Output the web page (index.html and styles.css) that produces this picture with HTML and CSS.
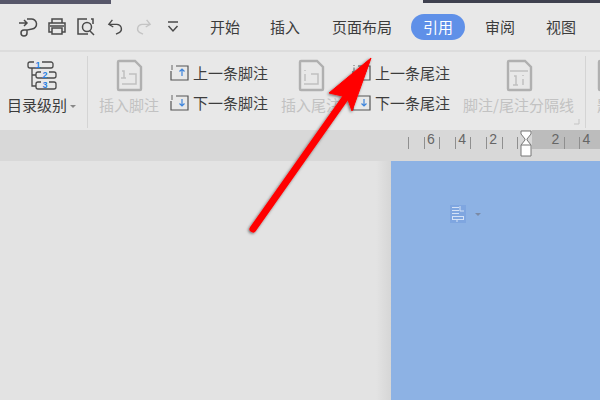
FILE: index.html
```html
<!DOCTYPE html>
<html lang="zh-CN">

<head>
  <meta charset="UTF-8">
  <title>引用</title>
  <link rel="stylesheet" href="styles.css">
</head>

<body>
  <div class="topstrip">
    <div class="left"></div>
    <div class="right"></div>
  </div>

  <div class="tabbar">
    <div class="quick">
      <svg class="qicon save" viewBox="0 0 20 20"><path d="M-6 3h12l4 4v10H-6zM1 17v-6h6v6" /></svg>
      <svg class="qicon" viewBox="0 0 20 20"><path d="M1 6h8M6 3l3 3-3 3M9 2h4a5 5 0 0 1 1 10l-5 1v3a3 3 0 1 1-3-3h4" /></svg>
      <svg class="qicon" viewBox="0 0 20 20"><path d="M5 6V2h10v4M5 15H2V6h16v9h-3M5 11h10v6H5zM3 9h14" /></svg>
      <svg class="qicon" viewBox="0 0 20 20"><path d="M11 2H2v15h10M15 2h2v5M18 18l-4-4" /><circle cx="11" cy="10" r="4.500" /></svg>
      <svg class="qicon undo" viewBox="0 0 20 20"><path d="M6 2L2 7l5 3M2 7h9a5 5 0 0 1 3 9l-4 2" /></svg>
      <svg class="qicon off" viewBox="0 0 20 20"><path d="M14 2l4 5-5 3M18 7H9a5 5 0 0 0-3 9l4 2" /></svg>
      <svg class="qicon more" viewBox="0 0 14 14"><path d="M2 2h10M2.500 6l4.500 5 4.500-5" /></svg>
    </div>
    <div class="tabs">
      <span class="tab t1">开始</span>
      <span class="tab t2">插入</span>
      <span class="tab t3">页面布局</span>
      <span class="tab active">引用</span>
      <span class="tab t5">审阅</span>
      <span class="tab">视图</span>
    </div>
  </div>

  <div class="ribbon">
    <div class="group toc">
      <svg class="tocicon" viewBox="0 0 30 30">
        <path class="line" d="M7 1H3a2 2 0 0 0-2 2v2a2 2 0 0 0 2 2h21a2 2 0 0 0 2-2V3a2 2 0 0 0-2-2h-9" />
        <path class="line" d="M14 11h-3a2 2 0 0 0-2 2v2a2 2 0 0 0 2 2h16a2 2 0 0 0 2-2v-2a2 2 0 0 0-2-2h-5" />
        <path class="line" d="M14 21h-3a2 2 0 0 0-2 2v3a2 2 0 0 0 2 2h16a2 2 0 0 0 2-2v-3a2 2 0 0 0-2-2h-5" />
        <path class="line" d="M5 7v18h4M5 14h4" />
        <text x="11" y="7">1</text>
        <text x="18" y="17">2</text>
        <text x="18" y="27">3</text>
      </svg>
      <div class="label">目录级别<i class="caret"></i></div>
    </div>
    <div class="sep"></div>

    <div class="group big note1">
      <svg class="doc" viewBox="0 0 26 31"><path class="edge" d="M3 1h16l6 6v22a1 1 0 0 1-1 1H3a1 1 0 0 1-1-1V2a1 1 0 0 1 1-1z" /><path class="thin" d="M6 11h2v7M5 18h5M13 14h7v10H6" /></svg>
      <div class="label off">插入脚注</div>
    </div>

    <div class="group pair p1">
      <div class="row"><svg class="nav" viewBox="0 0 19 17"><path class="box" d="M6 2h12v14H1V7" /><path class="num" d="M2 1v5" /><path class="arr" d="M12 12V5M9.500 7.500L12 5l2.500 2.500" /></svg>上一条脚注</div>
      <div class="row"><svg class="nav" viewBox="0 0 19 17"><path class="box" d="M6 2h12v14H1V7" /><path class="num" d="M2 1v5" /><path class="arr" d="M12 5v7M9.500 9.500L12 12l2.500-2.500" /></svg>下一条脚注</div>
    </div>

    <div class="group big note2">
      <svg class="doc" viewBox="0 0 26 31"><path class="edge" d="M3 1h16l6 6v22a1 1 0 0 1-1 1H3a1 1 0 0 1-1-1V2a1 1 0 0 1 1-1z" /><path class="thin" d="M7 10v1M7 14v7M13 14h7v10H6" /></svg>
      <div class="label off">插入尾注</div>
    </div>

    <div class="group pair p2">
      <div class="row"><svg class="nav" viewBox="0 0 19 17"><path class="box" d="M6 2h12v14H1V7" /><path class="num" d="M2 1v1M2 3.500V7" /><path class="arr" d="M12 12V5M9.500 7.500L12 5l2.500 2.500" /></svg>上一条尾注</div>
      <div class="row"><svg class="nav" viewBox="0 0 19 17"><path class="box" d="M6 2h12v14H1V7" /><path class="num" d="M2 1v1M2 3.500V7" /><path class="arr" d="M12 5v7M9.500 9.500L12 12l2.500-2.500" /></svg>下一条尾注</div>
    </div>

    <div class="group big sepnote">
      <svg class="doc" viewBox="0 0 26 31"><path class="edge" d="M3 1h16l6 6v22a1 1 0 0 1-1 1H3a1 1 0 0 1-1-1V2a1 1 0 0 1 1-1z" /><path class="thin" d="M4 11h18M8 16h2v9M7 25h5M17 15v1M17 19v6" /></svg>
      <div class="label off">脚注/尾注分隔线</div>
      <svg class="launcher" viewBox="0 0 6 6"><path d="M5 0v5H0" /></svg>
    </div>
    <div class="sep end"></div>

    <div class="group big cutoff">
      <svg class="doc" viewBox="0 0 26 31"><path class="edge" d="M3 1h16l6 6v22a1 1 0 0 1-1 1H3a1 1 0 0 1-1-1V2a1 1 0 0 1 1-1z" /></svg>
      <div class="label off">题注</div>
    </div>
  </div>

  <div class="rulerbar">
    <div class="ruler">
      <div class="ticks">
        <i class="tk"></i><b></b><i class="tk"></i><b>6</b>
        <i class="tk"></i><b></b><i class="tk"></i><b>4</b>
        <i class="tk"></i><b></b><i class="tk"></i><b>2</b>
        <i class="tk"></i><b></b><i class="tk"></i>
      </div>
      <div class="ticks dim">
        <b>2</b><i class="tk"></i><b></b><i class="tk"></i><b>4</b>
      </div>
      <svg class="marker" viewBox="0 0 12 27"><path d="M1 1h10v3L7 9v1l4 5v11H1V15l4-5V9L1 4zM1 15h10" /></svg>
    </div>
  </div>

  <div class="workspace">
    <div class="margin"></div>
    <div class="page">
      <div class="para">
        <svg class="paraicon" viewBox="0 0 16 18"><path d="M2 2.500h7M2 5.500h7M2 8.500h7M10 1v5h4M7 14.500V17" /><rect x="2.500" y="11.500" width="11" height="3" /></svg>
        <i class="paracaret"></i>
      </div>
    </div>
  </div>

  <!-- red arrow drawn over the screenshot -->
  <svg class="arrow" viewBox="0 0 600 400">
    <defs>
      <filter id="shade" x="-20%" y="-20%" width="140%" height="140%">
        <feDropShadow dx="-1" dy="1" stdDeviation="1.500" flood-color="#000" flood-opacity=".55" />
      </filter>
    </defs>
    <g filter="url(#shade)">
      <path d="M253 229L346 97" stroke="#f00" stroke-width="7" stroke-linecap="round" />
      <path d="M371 58L329 93L347 97L352 111Z" fill="#f00" stroke="#f00" stroke-linejoin="round" />
    </g>
  </svg>
</body>

</html>
```

FILE: styles.css
```css
* {
  box-sizing: border-box;
}

body {
  margin: 0;
  width: 600px;
  height: 400px;
  overflow: hidden;
  position: relative;
  background: #e3e3e3;
  font-family: "Noto Sans CJK SC", "Liberation Sans", sans-serif;
  color: #3c3c3c;
}

.topstrip {
  height: 4px;
  display: flex;
  justify-content: space-between;
  background: #e8e8e8;
}

.left {
  width: 111px;
  background: #57576a;
}

.right {
  width: 177px;
  height: 3px;
  background: #3f414f;
}

/* tab row */
.tabbar {
  height: 46px;
  background: #e8e8e8;
  display: flex;
  align-items: center;
}

.quick {
  display: flex;
  align-items: center;
  width: 210px;
  height: 26px;
}

.qicon {
  width: 20px;
  height: 20px;
  margin-right: 9px;
  fill: none;
  stroke: #4a4a4a;
  stroke-width: 1.500;
  overflow: hidden;
  flex: none;
}

.save {
  margin-left: -13px;
  margin-right: 11px;
}

.undo {
  width: 18px;
  height: 18px;
  margin-left: 2px;
  margin-right: 9px;
}

.qicon.off {
  width: 18px;
  height: 18px;
  stroke: #c4c4c4;
  margin-right: 14px;
}

.qicon.more {
  width: 14px;
  height: 14px;
  margin: 0;
}

.tabs {
  display: flex;
  align-items: center;
  font-size: 15px;
  line-height: 20px;
}

.tab {
  white-space: nowrap;
}

.t1 {
  margin-right: 30px;
}

.t2 {
  margin-right: 32px;
}

.t3 {
  margin-right: 19px;
}

.t5 {
  margin-right: 31px;
}

.active {
  width: 54px;
  height: 26px;
  line-height: 26px;
  margin-right: 20px;
  text-align: center;
  border-radius: 13px;
  background: #5f90e8;
  color: #fff;
}

/* ribbon */
.ribbon {
  height: 80px;
  background: #e8e8e8;
  border-top: 2px solid #dcdcdc;
  display: flex;
}

.group {
  display: flex;
  flex-direction: column;
  align-items: center;
  position: relative;
  flex: none;
}

.label {
  font-size: 15px;
  line-height: 20px;
  white-space: nowrap;
}

.off {
  color: #c2c2c2;
}

.toc {
  width: 87px;
  padding-top: 9px;
}

.tocicon {
  width: 30px;
  height: 30px;
  margin-bottom: 4px;
  margin-left: -3px;
  fill: none;
  overflow: visible;
}

.tocicon .line {
  stroke: #4a4a4a;
  stroke-width: 1.300;
}

.tocicon text {
  fill: #2a7fe0;
  stroke: none;
  font-family: "Liberation Sans", sans-serif;
  font-size: 9px;
  font-weight: bold;
  text-anchor: middle;
}

.caret {
  display: inline-block;
  margin-left: 3px;
  vertical-align: 3px;
  border: 3px solid transparent;
  border-top: 3px solid #888;
  border-bottom: 0;
}

.toc .label {
  margin-left: -4px;
}

.sep {
  width: 1px;
  height: 72px;
  margin-top: 4px;
  background: #d4d4d4;
  flex: none;
}

.sep.end {
  margin-left: 11px;
}

.big {
  padding-top: 8px;
}

.doc {
  width: 26px;
  height: 31px;
  margin-bottom: 4px;
  fill: none;
  overflow: visible;
}

.doc .edge {
  stroke: #b0b0b0;
  stroke-width: 2.400;
}

.doc .thin {
  stroke: #c0c0c0;
  stroke-width: 1.500;
}

.note1 {
  width: 82px;
}

.note2 {
  width: 72px;
  margin-left: 6px;
}

.sepnote {
  width: 111px;
  margin-left: 12px;
}

.cutoff {
  margin-left: 11px;
  align-items: flex-start;
}

.pair {
  width: 99px;
  padding-top: 5px;
  align-items: flex-start;
}

.p2 {
  margin-left: 5px;
}

.row {
  display: flex;
  align-items: center;
  height: 30px;
  font-size: 15px;
  white-space: nowrap;
}

.nav {
  width: 19px;
  height: 17px;
  margin-right: 4px;
  fill: none;
}

.nav .box {
  stroke: #555;
  stroke-width: 1.200;
}

.nav .num {
  stroke: #666;
}

.nav .arr {
  stroke: #3d84db;
  stroke-width: 1.200;
}

.launcher {
  position: absolute;
  right: -6px;
  bottom: 5px;
  width: 6px;
  height: 6px;
  fill: none;
  stroke: #c4c4c4;
}

/* ruler */
.rulerbar {
  height: 31px;
  background: #d8d8d8;
}

.ruler {
  height: 19px;
  position: relative;
  display: flex;
}

.ticks {
  margin-left: 408px;
  width: 124px;
  height: 19px;
  display: flex;
  align-items: flex-end;
  font-size: 14px;
  line-height: 19px;
  color: #666;
  font-family: "Liberation Sans", sans-serif;
}

.ticks b {
  width: 14.600px;
  height: 19px;
  font-weight: normal;
  text-align: center;
  flex: none;
  position: relative;
  left: -1px;
}

.tk {
  width: 1px;
  height: 12px;
  background: #8f8f8f;
  flex: none;
}

.ticks.dim {
  margin-left: 0;
  width: auto;
  flex: 1;
  padding-left: 17px;
  background: #bcbcbc;
}

.marker {
  position: absolute;
  left: 520px;
  top: 0;
  width: 12px;
  height: 27px;
  fill: #fff;
  stroke: #777;
}

/* document area */
.workspace {
  height: 239px;
  display: flex;
}

.margin {
  width: 391px;
  background: linear-gradient(to right, #e3e3e3 376px, #d6d6d6 391px);
}

.page {
  flex: 1;
  background: #8db2e4;
  padding: 44px 0 0 59px;
}

.para {
  display: flex;
  align-items: center;
  gap: 9px;
}

.paraicon {
  width: 16px;
  height: 18px;
  background: #7fa6e0;
  fill: none;
  stroke: #d4e2f6;
}

.paracaret {
  border: 3px solid transparent;
  border-top: 3px solid #7b8aa5;
  border-bottom: 0;
}

/* annotation */
.arrow {
  position: absolute;
  left: 0;
  top: 0;
  width: 600px;
  height: 400px;
  pointer-events: none;
}
```
